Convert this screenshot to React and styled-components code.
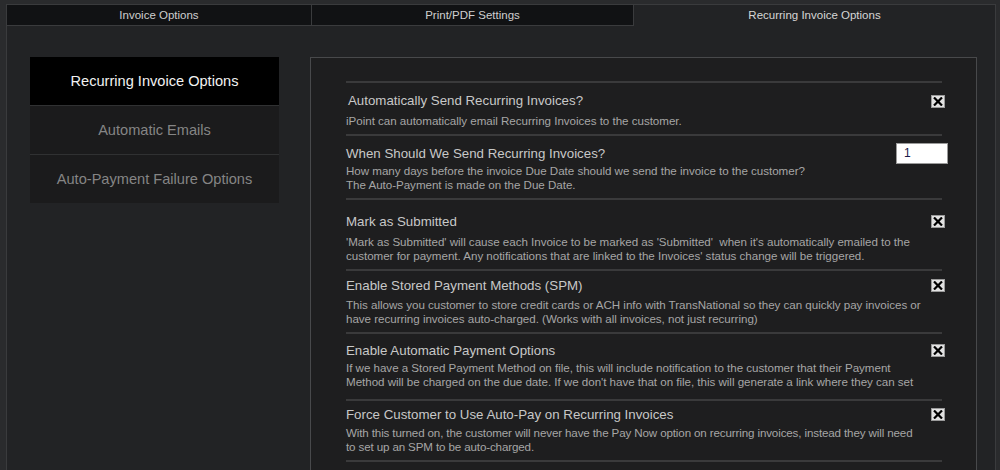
import React from "react";
import styled, { createGlobalStyle } from "styled-components";

const GlobalStyle = createGlobalStyle`
  html, body {
    margin: 0;
    padding: 0;
    height: 470px;
    overflow: hidden;
    background: #2a2b2d;
    font-family: "Liberation Sans", Arial, sans-serif;
  }
`;

const Page = styled.div`
  padding: 4px 4px 0 6px;
`;

const Frame = styled.div`
  height: 466px;
  background: #222325;
  border-right: 1px solid #3a3b3d;
  box-sizing: border-box;
  display: flex;
  flex-direction: column;
`;

const Tabs = styled.div`
  display: grid;
  grid-template-columns: 306px 322px 1fr;
  height: 22px;
  flex: 0 0 auto;
`;

const Tab = styled.div`
  display: flex;
  align-items: center;
  justify-content: center;
  font-size: 11.5px;
  color: ${(p) => (p.$active ? "#d6d6d6" : "#cfcfcf")};
  background: ${(p) => (p.$active ? "#222325" : "#111214")};
  border: 1px solid #3a3b3d;
  border-bottom-color: ${(p) => (p.$active ? "transparent" : "#3a3b3d")};
  border-right-width: ${(p) => (p.$active ? "0" : "1px")};
  box-sizing: border-box;
  & + & {
    border-left-width: 0;
  }
`;

const Body = styled.div`
  flex: 1;
  display: flex;
  gap: 31px;
  padding: 31px 18px 0 23px;
  border-left: 1px solid #3a3b3d;
  min-height: 0;
`;

const Nav = styled.div`
  flex: 0 0 249px;
  display: flex;
  flex-direction: column;
  align-self: flex-start;
`;

const NavItem = styled.div`
  height: 48px;
  display: flex;
  align-items: center;
  justify-content: center;
  font-size: 14.6px;
  color: ${(p) => (p.$active ? "#f2f2f2" : "#858585")};
  background: ${(p) => (p.$active ? "#000000" : "#1b1b1c")};
  & + & {
    border-top: 1px solid #303132;
  }
`;

const Panel = styled.div`
  flex: 1;
  background: #1e1e1f;
  border: 1px solid #48494b;
  border-bottom: 0;
  padding: 23px 28px 0 35px;
  overflow: hidden;
`;

const List = styled.div`
  border-top: 2px solid #3a3a3b;
  margin-right: 6px;
`;

const Row = styled.div`
  display: grid;
  grid-template-columns: 1fr auto;
  column-gap: 12px;
  padding: ${(p) => p.$top}px 0 5px;
  border-bottom: 2px solid #3a3a3b;
`;

const Title = styled.div`
  font-size: 13.3px;
  line-height: 16px;
  color: #c8c8c8;
  padding-left: ${(p) => (p.$indent ? "2px" : "0")};
`;

const Desc = styled.div`
  grid-column: 1 / -1;
  margin-top: ${(p) => p.$gap}px;
  font-size: 11.6px;
  line-height: 14.5px;
  color: #a6a6a6;
  white-space: nowrap;
  letter-spacing: ${(p) => (p.$tight ? "-0.13px" : "-0.03px")};
  max-height: ${(p) => (p.$clip ? "33px" : "none")};
  overflow: ${(p) => (p.$clip ? "hidden" : "visible")};
`;

const Control = styled.div`
  grid-row: 1 / 2;
  grid-column: 2 / 3;
  display: flex;
  align-items: center;
  justify-content: flex-end;
  margin-right: -3px;
`;

const Box = styled.span`
  width: 14px;
  height: 13px;
  background: #e2e2e2;
  border: 1px solid #9a9a9a;
  box-sizing: border-box;
  display: flex;
  align-items: center;
  justify-content: center;
`;

const NumberInput = styled.input`
  width: 52px;
  height: 21px;
  box-sizing: border-box;
  margin: -3px -3px -2px 0;
  border: 1px solid #9a9a9a;
  background: #ffffff;
  color: #1a1a4a;
  font-family: "Liberation Sans", Arial, sans-serif;
  font-size: 12px;
  padding: 0 7px;
  outline: none;
`;

const Check = () => (
  <Box>
    <svg width="10" height="9" viewBox="0 0 10 9">
      <path d="M1 0.5 L9 8.5 M9 0.5 L1 8.5" stroke="#000" strokeWidth="2.2" />
    </svg>
  </Box>
);

const options = [
  {
    title: "Automatically Send Recurring Invoices?",
    desc: ["iPoint can automatically email Recurring Invoices to the customer."],
    indent: true,
    top: 10,
    gap: 5,
  },
  {
    title: "When Should We Send Recurring Invoices?",
    desc: [
      "How many days before the invoice Due Date should we send the invoice to the customer?",
      "The Auto-Payment is made on the Due Date.",
    ],
    input: true,
    top: 10,
    gap: 2,
  },
  {
    title: "Mark as Submitted",
    desc: [
      "'Mark as Submitted' will cause each Invoice to be marked as 'Submitted'\u00a0 when it's automatically emailed to the",
      "customer for payment. Any notifications that are linked to the Invoices' status change will be triggered.",
    ],
    top: 14,
    gap: 5,
  },
  {
    title: "Enable Stored Payment Methods (SPM)",
    desc: [
      "This allows you customer to store credit cards or ACH info with TransNational so they can quickly pay invoices or",
      "have recurring invoices auto-charged. (Works with all invoices, not just recurring)",
    ],
    top: 7,
    gap: 4,
  },
  {
    title: "Enable Automatic Payment Options",
    desc: [
      "If we have a Stored Payment Method on file, this will include notification to the customer that their Payment",
      "Method will be charged on the due date. If we don't have that on file, this will generate a link where they can set",
      "one up.",
    ],
    clip: true,
    top: 9,
    gap: 2,
  },
  {
    title: "Force Customer to Use Auto-Pay on Recurring Invoices",
    desc: [
      "With this turned on, the customer will never have the Pay Now option on recurring invoices, instead they will need",
      "to set up an SPM to be auto-charged.",
    ],
    tight: true,
    top: 6,
    gap: 3,
  },
];

const App = () => {
  const [days, setDays] = React.useState("1");

  return (
    <>
      <GlobalStyle />
      <Page>
        <Frame>
          <Tabs>
            <Tab>Invoice Options</Tab>
            <Tab>Print/PDF Settings</Tab>
            <Tab $active>Recurring Invoice Options</Tab>
          </Tabs>
          <Body>
            <Nav>
              <NavItem $active>Recurring Invoice Options</NavItem>
              <NavItem>Automatic Emails</NavItem>
              <NavItem>Auto-Payment Failure Options</NavItem>
            </Nav>
            <Panel>
              <List>
                {options.map((o) => (
                  <Row key={o.title} $top={o.top}>
                    <Title $indent={o.indent}>{o.title}</Title>
                    <Control>
                      {o.input ? (
                        <NumberInput
                          value={days}
                          onChange={(e) => setDays(e.target.value)}
                        />
                      ) : (
                        <Check />
                      )}
                    </Control>
                    <Desc $gap={o.gap} $clip={o.clip} $tight={o.tight}>
                      {o.desc.map((line) => (
                        <div key={line}>{line}</div>
                      ))}
                    </Desc>
                  </Row>
                ))}
              </List>
            </Panel>
          </Body>
        </Frame>
      </Page>
    </>
  );
};

export default App;
